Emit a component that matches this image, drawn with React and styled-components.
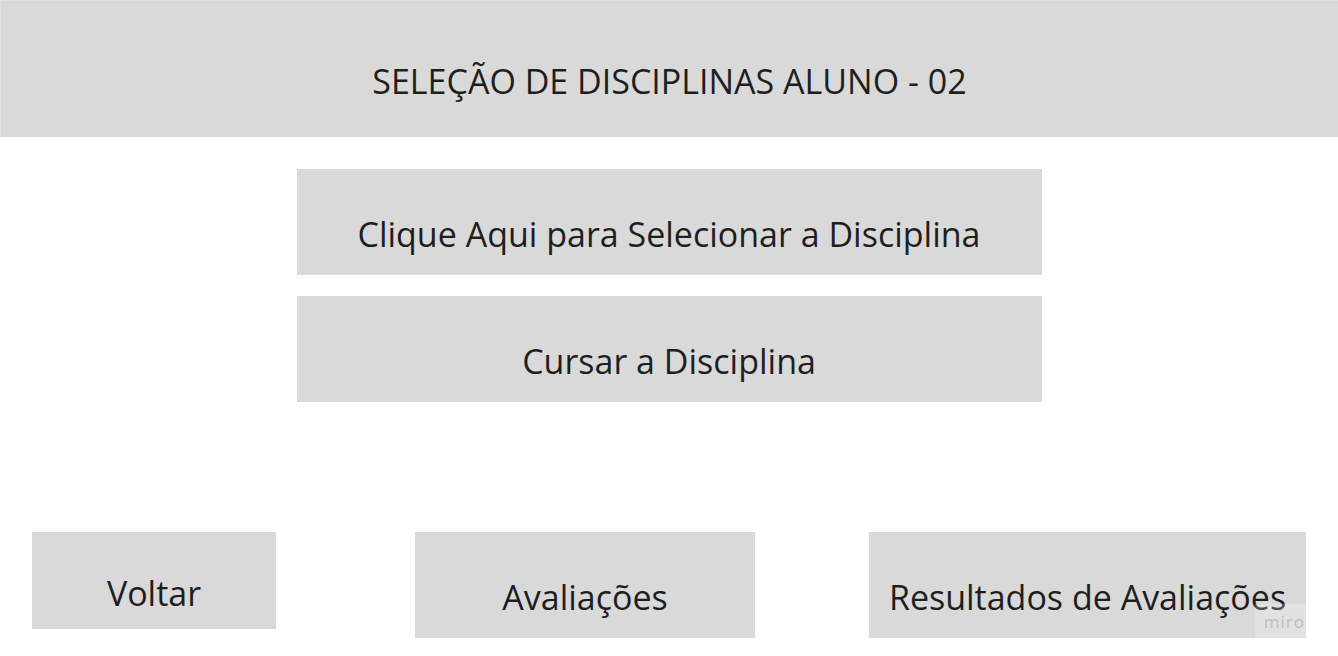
import React from "react";
import styled, { createGlobalStyle } from "styled-components";

const Global = createGlobalStyle`
  html, body { margin: 0; padding: 0; background: #ffffff; }
  body { font-family: "Open Sans", "Liberation Sans", sans-serif; }
`;

const Page = styled.div`
  position: relative;
  width: 1338px;
  height: 656px;
  overflow: hidden;
  display: flex;
  flex-direction: column;
  align-items: center;
`;

const Card = styled.div`
  box-sizing: border-box;
  background: #d9d9d9;
  color: #1e1e1e;
  font-family: "Open Sans", "Liberation Sans", sans-serif;
  font-size: ${(p) => p.$size || 34}px;
  font-weight: 400;
  display: flex;
  align-items: center;
  justify-content: center;
  padding-top: ${(p) => p.$shift || 24}px;
  white-space: nowrap;
  width: ${(p) => p.$w}px;
  height: ${(p) => p.$h}px;
  flex: none;
`;

const Header = styled(Card)`
  width: 100%;
  border-top: 1px solid #e2e2e2;
  border-left: 1px solid #e2e2e2;
`;

const Stack = styled.div`
  display: flex;
  flex-direction: column;
  gap: 21px;
  margin-top: 32px;
`;

const BottomRow = styled.div`
  align-self: stretch;
  display: flex;
  align-items: flex-start;
  padding-left: 32px;
  margin-top: 130px;
`;

const Spacer = styled.div`
  width: ${(p) => p.$w}px;
  flex: none;
`;

const Watermark = styled.div`
  position: absolute;
  left: 1255px;
  top: 604px;
  width: 51px;
  height: 34px;
  background: rgba(255, 255, 255, 0.22);
  color: #bcbcc8;
  font-family: "Open Sans", "Liberation Sans", sans-serif;
  font-size: 17px;
  letter-spacing: 1px;
  display: flex;
  align-items: center;
  justify-content: flex-end;
  padding-right: 1px;
  box-sizing: border-box;
`;

export default function App() {
  return (
    <>
      <Global />
      <Page>
        <Header $h={137} $shift={24}>SELEÇÃO DE DISCIPLINAS ALUNO - 02</Header>
        <Stack>
          <Card $w={745} $h={106}>Clique Aqui para Selecionar a Disciplina</Card>
          <Card $w={745} $h={106}>Cursar a Disciplina</Card>
        </Stack>
        <BottomRow>
          <Card $w={244} $h={97}>Voltar</Card>
          <Spacer $w={139} />
          <Card $w={340} $h={106}>Avaliações</Card>
          <Spacer $w={114} />
          <Card $w={437} $h={106}>Resultados de Avaliações</Card>
        </BottomRow>
        <Watermark>miro</Watermark>
      </Page>
    </>
  );
}
